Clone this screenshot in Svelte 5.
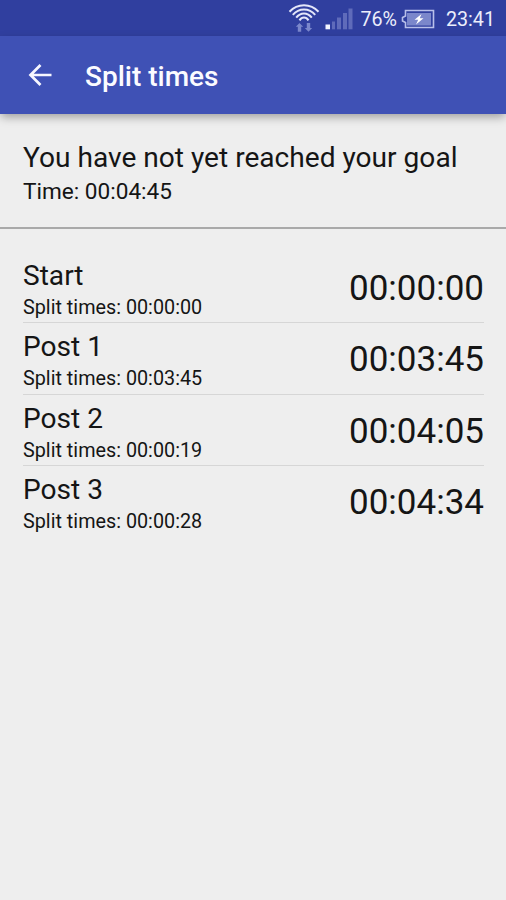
<script lang="ts">
	const summary = {
		message: 'You have not yet reached your goal',
		time: '00:04:45',
	};

	const posts = [
		{ name: 'Start', split: '00:00:00', total: '00:00:00' },
		{ name: 'Post 1', split: '00:03:45', total: '00:03:45' },
		{ name: 'Post 2', split: '00:00:19', total: '00:04:05' },
		{ name: 'Post 3', split: '00:00:28', total: '00:04:34' },
	];
</script>

<div class="screen">
	<div class="status">
		<svg class="status_wifi" width="32" height="30" viewBox="0 0 32 30" fill="none">
			<g stroke="#e4e7fa" stroke-width="2">
				<path d="M1.5 8.8C9.5 0.2 22.5 0.2 30.5 8.8" />
				<path d="M4.8 11.8C11 4.6 21 4.6 27.2 11.8" />
				<path d="M8.2 14.6C12.5 9 19.5 9 23.8 14.6" />
				<path d="M11.5 17.4C14 13.6 18 13.6 20.5 17.4" />
			</g>
			<path
				d="M11.5 20L15.2 23.8H13.2V28.8H9.8V23.8H7.8ZM20.5 28.8L16.8 25H18.8V20H22.2V25H24.2Z"
				fill="#7b87cb"
			/>
		</svg>
		<svg class="status_signal" width="28" height="24" viewBox="0 0 28 24">
			<rect x="0.5" y="17.5" width="4.5" height="4.8" fill="#f2f4ff" />
			<g fill="#5f6bba">
				<rect x="7" y="14.5" width="3" height="7.8" />
				<rect x="12" y="10.5" width="4" height="11.8" />
				<rect x="18" y="6" width="4" height="16.3" />
				<rect x="23.5" y="1.5" width="4" height="20.8" />
			</g>
		</svg>
		<span class="status_percent">76%</span>
		<svg class="status_battery" width="34" height="20" viewBox="0 0 34 20">
			<path
				d="M4.5 1.5H32.5V18.5H4.5V13.5L1.5 12V8.5L4.5 7Z"
				fill="none"
				stroke="#b9c0ea"
				stroke-width="1.6"
			/>
			<rect x="6" y="4" width="24" height="12.5" fill="#7b87cb" />
			<path d="M20.5 5L13.5 10.8H17.2L15 15.5L22.5 9.2H18.8Z" fill="#fff" />
		</svg>
		<span class="status_clock">23:41</span>
	</div>

	<header class="toolbar">
		<button class="toolbar_back" aria-label="Back">
			<svg width="24" height="24" viewBox="0 0 24 24" fill="none">
				<path d="M23.5 12H2.5M12.5 2L2.5 12L12.5 22" stroke="#f7f7ff" stroke-width="2.7" />
			</svg>
		</button>
		<h1 class="toolbar_title">Split times</h1>
	</header>

	<section class="summary">
		<p class="summary_message">{summary.message}</p>
		<p class="summary_time">Time: {summary.time}</p>
	</section>

	<ul class="posts">
		{#each posts as post (post.name)}
			<li class="post">
				<div class="post_info">
					<span class="post_name">{post.name}</span>
					<span class="post_split">Split times: {post.split}</span>
				</div>
				<time class="post_total">{post.total}</time>
			</li>
		{/each}
	</ul>
</div>

<style>
	:global(body) {
		margin: 0;
		background: #eee;
	}

	.screen {
		display: flex;
		flex-direction: column;
		width: 100%;
		height: 900px;
		overflow: hidden;
		background: #eee;
		color: #151515;
		font-family: Roboto, 'Liberation Sans', sans-serif;
	}

	.status {
		display: flex;
		flex: none;
		align-items: center;
		justify-content: flex-end;
		box-sizing: border-box;
		height: 36px;
		padding: 2px 11px 0 0;
		background: #303f9f;
		color: #eceefb;
		font-size: 19.7px;
		line-height: 34px;
	}

	.status svg {
		flex: none;
	}

	.status_percent,
	.status_clock {
		padding-top: 2px;
	}

	.status_wifi {
		margin: 0 5px 2px 0;
	}

	.status_signal {
		margin-right: 7px;
	}

	.status_battery {
		margin: 0 11px 1px 4px;
	}

	.toolbar {
		z-index: 1;
		display: flex;
		flex: none;
		align-items: center;
		height: 78px;
		padding-left: 28px;
		background: #3f51b5;
		box-shadow: 0 4px 9px -1px rgba(0, 0, 0, 0.34);
	}

	.toolbar_back {
		display: flex;
		margin: 0 33px 0 0;
		padding: 0;
		border: 0;
		background: none;
	}

	.toolbar_title {
		margin: 0;
		padding-top: 3px;
		color: #fbfbff;
		font-size: 28px;
		font-weight: 500;
		line-height: 33px;
	}

	.summary {
		flex: none;
		box-sizing: border-box;
		height: 115px;
		padding: 27px 23px 0;
		border-bottom: 2px solid #a9a9a9;
	}

	.summary p {
		margin: 0;
	}

	.summary_message {
		font-size: 28.1px;
		line-height: 33px;
	}

	.summary .summary_time {
		margin-top: 5px;
		font-size: 22.6px;
		line-height: 26px;
	}

	.posts {
		margin: 0;
		padding: 23px 22px 0 23px;
		list-style: none;
	}

	.post {
		display: flex;
		align-items: center;
		justify-content: space-between;
		box-sizing: border-box;
		height: 71.3px;
		border-bottom: 1.4px solid #d6d6d6;
	}

	.post:last-child {
		border-bottom-color: transparent;
	}

	.post_info {
		display: flex;
		flex-direction: column;
		gap: 4px;
		padding-top: 3.6px;
	}

	.post_name {
		font-size: 28.1px;
		line-height: 33px;
	}

	.post_split {
		font-size: 19.8px;
		line-height: 23px;
	}

	.post_total {
		padding-top: 4px;
		font-size: 35px;
		line-height: 42px;
	}
</style>
